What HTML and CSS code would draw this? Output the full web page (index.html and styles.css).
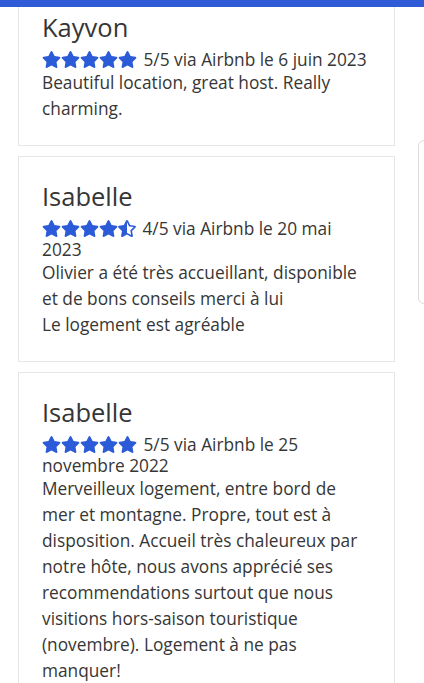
FILE: index.html
```html
<!DOCTYPE html>
<html>
<head>
<meta name="viewport" content="width=device-width, initial-scale=1">
<link rel="stylesheet" href="styles.css">
</head>
<body>
<!-- top bar -->
<div class="topbar"></div>
<div class="sidetab"></div>

<!-- reviews -->
<div class="reviews">
  <div class="review">
    <div class="review-name">Kayvon</div>
    <div class="review-meta">
      <span class="stars">
        <svg class="star" viewBox="0 0 576 512"><path d="M259.3 17.8L194 150.2 47.9 171.5c-26.2 3.8-36.7 36.1-17.7 54.6l105.7 103-25 145.5c-4.5 26.3 23.2 46 46.4 33.7L288 439.6l130.7 68.7c23.2 12.2 50.9-7.4 46.4-33.7l-25-145.5 105.7-103c19-18.5 8.5-50.8-17.7-54.6L382 150.2 316.7 17.8c-11.7-23.6-45.6-23.9-57.4 0z"/></svg><svg class="star" viewBox="0 0 576 512"><path d="M259.3 17.8L194 150.2 47.9 171.5c-26.2 3.8-36.7 36.1-17.7 54.6l105.7 103-25 145.5c-4.5 26.3 23.2 46 46.4 33.7L288 439.6l130.7 68.7c23.2 12.2 50.9-7.4 46.4-33.7l-25-145.5 105.7-103c19-18.5 8.5-50.8-17.7-54.6L382 150.2 316.7 17.8c-11.7-23.6-45.6-23.9-57.4 0z"/></svg><svg class="star" viewBox="0 0 576 512"><path d="M259.3 17.8L194 150.2 47.9 171.5c-26.2 3.8-36.7 36.1-17.7 54.6l105.7 103-25 145.5c-4.5 26.3 23.2 46 46.4 33.7L288 439.6l130.7 68.7c23.2 12.2 50.9-7.4 46.4-33.7l-25-145.5 105.7-103c19-18.5 8.5-50.8-17.7-54.6L382 150.2 316.7 17.8c-11.7-23.6-45.6-23.9-57.4 0z"/></svg><svg class="star" viewBox="0 0 576 512"><path d="M259.3 17.8L194 150.2 47.9 171.5c-26.2 3.8-36.7 36.1-17.7 54.6l105.7 103-25 145.5c-4.5 26.3 23.2 46 46.4 33.7L288 439.6l130.7 68.7c23.2 12.2 50.9-7.4 46.4-33.7l-25-145.5 105.7-103c19-18.5 8.5-50.8-17.7-54.6L382 150.2 316.7 17.8c-11.7-23.6-45.6-23.9-57.4 0z"/></svg><svg class="star" viewBox="0 0 576 512"><path d="M259.3 17.8L194 150.2 47.9 171.5c-26.2 3.8-36.7 36.1-17.7 54.6l105.7 103-25 145.5c-4.5 26.3 23.2 46 46.4 33.7L288 439.6l130.7 68.7c23.2 12.2 50.9-7.4 46.4-33.7l-25-145.5 105.7-103c19-18.5 8.5-50.8-17.7-54.6L382 150.2 316.7 17.8c-11.7-23.6-45.6-23.9-57.4 0z"/></svg>
      </span>
      5/5 via Airbnb le 6 juin 2023
    </div>
    <div class="review-text">Beautiful location, great host. Really charming.</div>
  </div>

  <div class="review">
    <div class="review-name">Isabelle</div>
    <div class="review-meta">
      <span class="stars">
        <svg class="star" viewBox="0 0 576 512"><path d="M259.3 17.8L194 150.2 47.9 171.5c-26.2 3.8-36.7 36.1-17.7 54.6l105.7 103-25 145.5c-4.5 26.3 23.2 46 46.4 33.7L288 439.6l130.7 68.7c23.2 12.2 50.9-7.4 46.4-33.7l-25-145.5 105.7-103c19-18.5 8.5-50.8-17.7-54.6L382 150.2 316.7 17.8c-11.7-23.6-45.6-23.9-57.4 0z"/></svg><svg class="star" viewBox="0 0 576 512"><path d="M259.3 17.8L194 150.2 47.9 171.5c-26.2 3.8-36.7 36.1-17.7 54.6l105.7 103-25 145.5c-4.5 26.3 23.2 46 46.4 33.7L288 439.6l130.7 68.7c23.2 12.2 50.9-7.4 46.4-33.7l-25-145.5 105.7-103c19-18.5 8.5-50.8-17.7-54.6L382 150.2 316.7 17.8c-11.7-23.6-45.6-23.9-57.4 0z"/></svg><svg class="star" viewBox="0 0 576 512"><path d="M259.3 17.8L194 150.2 47.9 171.5c-26.2 3.8-36.7 36.1-17.7 54.6l105.7 103-25 145.5c-4.5 26.3 23.2 46 46.4 33.7L288 439.6l130.7 68.7c23.2 12.2 50.9-7.4 46.4-33.7l-25-145.5 105.7-103c19-18.5 8.5-50.8-17.7-54.6L382 150.2 316.7 17.8c-11.7-23.6-45.6-23.9-57.4 0z"/></svg><svg class="star" viewBox="0 0 576 512"><path d="M259.3 17.8L194 150.2 47.9 171.5c-26.2 3.8-36.7 36.1-17.7 54.6l105.7 103-25 145.5c-4.5 26.3 23.2 46 46.4 33.7L288 439.6l130.7 68.7c23.2 12.2 50.9-7.4 46.4-33.7l-25-145.5 105.7-103c19-18.5 8.5-50.8-17.7-54.6L382 150.2 316.7 17.8c-11.7-23.6-45.6-23.9-57.4 0z"/></svg><svg class="star half" viewBox="0 0 536 512"><path d="M508.55 171.51L362.18 150.2 296.77 17.81C290.89 5.98 279.42 0 267.95 0c-11.4 0-22.790 5.9-28.69 17.81l-65.43 132.38-146.38 21.29c-26.25 3.8-36.77 36.09-17.74 54.59l105.89 103-25.06 145.48C86.98 495.33 103.57 512 122.15 512c4.93 0 10-1.17 14.87-3.75l130.95-68.68 130.94 68.7c4.86 2.55 9.92 3.71 14.83 3.71 18.6 0 35.22-16.61 31.66-37.4l-25.03-145.49 105.91-102.98c19.04-18.5 8.52-50.8-17.73-54.6zm-121.74 123.2l-18.12 17.62 4.28 24.88 19.52 113.45-102.13-53.59-22.38-11.74.03-317.19 51.03 103.29 11.18 22.63 25.01 3.64 114.23 16.630-82.65 80.38z"/></svg>
      </span>
      4/5 via Airbnb le 20 mai 2023
    </div>
    <div class="review-text">Olivier a été très accueillant, disponible et de bons conseils merci à lui<br>Le logement est agréable</div>
  </div>

  <div class="review">
    <div class="review-name">Isabelle</div>
    <div class="review-meta">
      <span class="stars">
        <svg class="star" viewBox="0 0 576 512"><path d="M259.3 17.8L194 150.2 47.9 171.5c-26.2 3.8-36.7 36.1-17.7 54.6l105.7 103-25 145.5c-4.5 26.3 23.2 46 46.4 33.7L288 439.6l130.7 68.7c23.2 12.2 50.9-7.4 46.4-33.7l-25-145.5 105.7-103c19-18.5 8.5-50.8-17.7-54.6L382 150.2 316.7 17.8c-11.7-23.6-45.6-23.9-57.4 0z"/></svg><svg class="star" viewBox="0 0 576 512"><path d="M259.3 17.8L194 150.2 47.9 171.5c-26.2 3.8-36.7 36.1-17.7 54.6l105.7 103-25 145.5c-4.5 26.3 23.2 46 46.4 33.7L288 439.6l130.7 68.7c23.2 12.2 50.9-7.4 46.4-33.7l-25-145.5 105.7-103c19-18.5 8.5-50.8-17.7-54.6L382 150.2 316.7 17.8c-11.7-23.6-45.6-23.9-57.4 0z"/></svg><svg class="star" viewBox="0 0 576 512"><path d="M259.3 17.8L194 150.2 47.9 171.5c-26.2 3.8-36.7 36.1-17.7 54.6l105.7 103-25 145.5c-4.5 26.3 23.2 46 46.4 33.7L288 439.6l130.7 68.7c23.2 12.2 50.9-7.4 46.4-33.7l-25-145.5 105.7-103c19-18.5 8.5-50.8-17.7-54.6L382 150.2 316.7 17.8c-11.7-23.6-45.6-23.9-57.4 0z"/></svg><svg class="star" viewBox="0 0 576 512"><path d="M259.3 17.8L194 150.2 47.9 171.5c-26.2 3.8-36.7 36.1-17.7 54.6l105.7 103-25 145.5c-4.5 26.3 23.2 46 46.4 33.7L288 439.6l130.7 68.7c23.2 12.2 50.9-7.4 46.4-33.7l-25-145.5 105.7-103c19-18.5 8.5-50.8-17.7-54.6L382 150.2 316.7 17.8c-11.7-23.6-45.6-23.9-57.4 0z"/></svg><svg class="star" viewBox="0 0 576 512"><path d="M259.3 17.8L194 150.2 47.9 171.5c-26.2 3.8-36.7 36.1-17.7 54.6l105.7 103-25 145.5c-4.5 26.3 23.2 46 46.4 33.7L288 439.6l130.7 68.7c23.2 12.2 50.9-7.4 46.4-33.7l-25-145.5 105.7-103c19-18.5 8.5-50.8-17.7-54.6L382 150.2 316.7 17.8c-11.7-23.6-45.6-23.9-57.4 0z"/></svg>
      </span>
      5/5 via Airbnb le 25 novembre 2022
    </div>
    <div class="review-text">Merveilleux logement, entre bord de mer et montagne. Propre, tout est à disposition. Accueil très chaleureux par notre hôte, nous avons apprécié ses recommendations surtout que nous visitions hors-saison touristique (novembre). Logement à ne pas manquer!</div>
  </div>
</div>
</body>
</html>
```

FILE: styles.css
```css
body {
  margin: 0;
  font-family: "Open Sans", sans-serif;
  color: #363636;
  background: #fff;
  overflow: hidden;
}
.topbar {
  position: fixed;
  top: 0;
  left: 0;
  right: 0;
  height: 7px;
  background-color: #2f5cd6;
  z-index: 2;
}
.sidetab {
  position: fixed;
  top: 140px;
  right: -20px;
  width: 24px;
  height: 162px;
  border: 1px solid #dcdcdc;
  border-radius: 6px;
}
.reviews {
  margin-top: -13px;
}
.review {
  margin: 0 29px 10px 18px;
  padding: 23px 24px 23px 23px;
  border: 1px solid #e6e6e6;
}
.review-name {
  font-size: 25.5px;
  line-height: 32px;
  margin-bottom: 6px;
}
.review-meta {
  font-size: 17.3px;
  line-height: 21px;
}
.stars {
  display: inline-flex;
  margin-right: 2px;
  vertical-align: -2px;
}
.star {
  width: 19px;
  height: 17px;
  fill: #2b5bd7;
}
.star.half {
  width: 18px;
}
.review-text {
  font-size: 17.3px;
  line-height: 26px;
}
```
